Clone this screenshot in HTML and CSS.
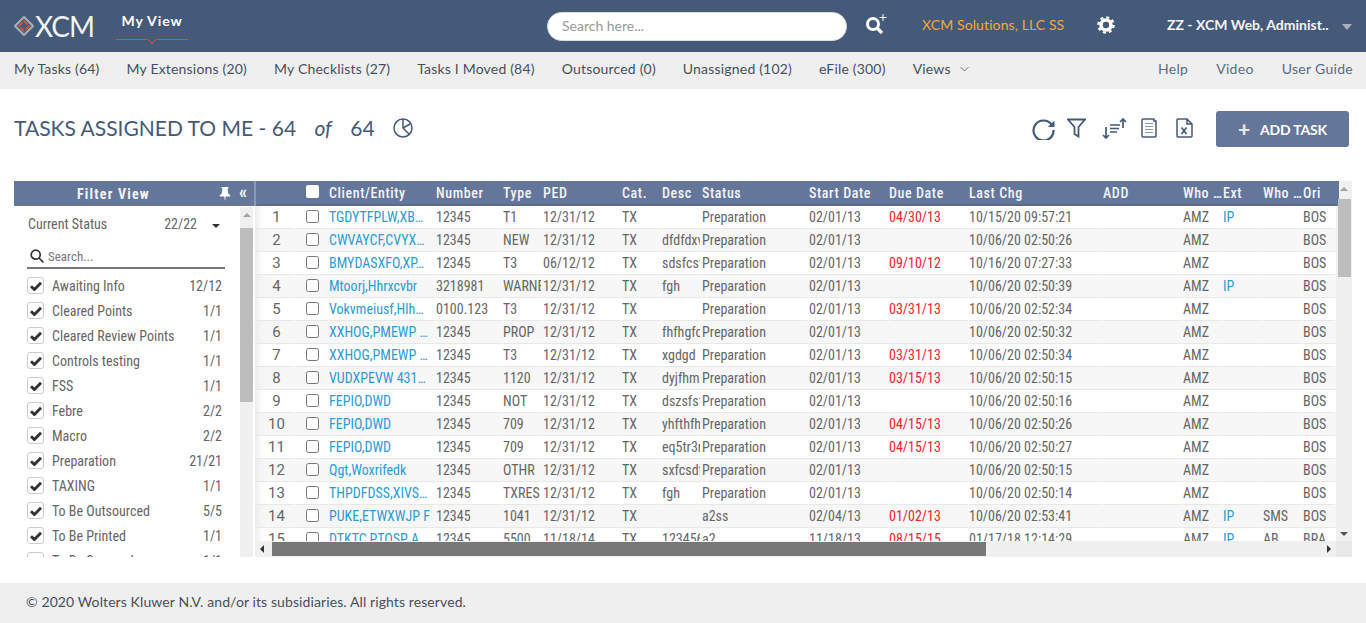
FILE: index.html
```html
<!DOCTYPE html>
<html lang="en">
<head>
	<meta charset="UTF-8">
	<title>XCM - My View</title>
	<link rel="stylesheet" href="styles.css">
</head>
<body>
<svg class="defs" width="0" height="0">
	<symbol id="tick" viewBox="0 0 12 10"><path d="M1 5.200l3.400 3.400L11 1.800" fill="none" stroke="#333" stroke-width="2.800"/></symbol>
</svg>

<header class="topbar">
	<div class="logo">
		<svg width="20" height="20" viewBox="0 0 20 20">
			<path d="M10 1l9 9-9 9-9-9z" fill="none" stroke="#a9adb5" stroke-width="2"/>
			<path d="M10 5l5 5-5 5-5-5z" fill="none" stroke="#c8563a" stroke-width="2" stroke-dasharray="5 2"/>
		</svg>
		<span class="logo_txt">XCM</span>
	</div>
	<div class="myview">My View<i></i></div>
	<input class="topsearch" type="text" placeholder="Search here...">
	<svg class="ic_search" width="24" height="24" viewBox="0 0 24 24">
		<circle cx="8" cy="11" r="5.500" fill="none" stroke="#fff" stroke-width="3"/>
		<path d="M12 15l5 5" stroke="#fff" stroke-width="3.200"/>
		<path d="M18 1v7M14.500 4.500h7" stroke="#fff" stroke-width="1"/>
	</svg>
	<span class="company">XCM Solutions, LLC SS</span>
	<svg class="ic_gear" width="18" height="18" viewBox="0 0 18 18">
		<circle cx="9" cy="9" r="5" fill="none" stroke="#fff" stroke-width="3.600"/>
		<circle cx="9" cy="9" r="7.600" fill="none" stroke="#fff" stroke-width="2.400" stroke-dasharray="3 2.970"/>
	</svg>
	<span class="username">ZZ - XCM Web, Administ..</span>
	<i class="caret_user"></i>
</header>

<nav class="subnav">
	<a>My Tasks (64)</a>
	<a>My Extensions (20)</a>
	<a>My Checklists (27)</a>
	<a>Tasks I Moved (84)</a>
	<a>Outsourced (0)</a>
	<a>Unassigned (102)</a>
	<a>eFile (300)</a>
	<a class="views">Views
		<svg width="9" height="6" viewBox="0 0 9 6"><path d="M.5 1l4 4 4-4" fill="none" stroke="#777"/></svg>
	</a>
	<div class="subnav_right">
		<a>Help</a>
		<a>Video</a>
		<a>User Guide</a>
	</div>
</nav>

<section class="titlerow">
	<h1>TASKS ASSIGNED TO ME - 64 <em>of</em> 64</h1>
	<svg class="ic_pie" width="20" height="20" viewBox="0 0 20 20" fill="none" stroke="#455a78" stroke-width="1.500">
		<circle cx="10" cy="10" r="9"/>
		<path d="M10 1v9l6 6M10 10l7-4"/>
	</svg>
	<div class="tools">
		<svg class="ic_refresh" width="23" height="23" viewBox="0 0 23 23" fill="none" stroke="#455a78" stroke-width="2.200">
			<path d="M19.500 7.500A10 10 0 1 0 21.500 13"/>
			<path d="M22.500 3.500v6.500h-6.500z" fill="#455a78" stroke="none"/>
		</svg>
		<svg class="ic_filter" width="19" height="20" viewBox="0 0 19 20" fill="none" stroke="#455a78" stroke-width="1.800">
			<path d="M1 1.500h17l-6.500 7.500v9.500l-4-2.500v-7z"/>
		</svg>
		<svg class="ic_sort" width="25" height="21" viewBox="0 0 25 21" fill="none" stroke="#455a78" stroke-width="1.700">
			<path d="M4 9v11M1 17l3 3 3-3M21 10V1M18 4l3-3 3 3"/>
			<path d="M8 7h10M8 10.500h9M8 14h7"/>
		</svg>
		<svg class="ic_doc" width="17" height="20" viewBox="0 0 17 20" fill="none" stroke="#455a78" stroke-width="1.500">
			<path d="M2 1h11v2h2v15a1 1 0 0 1-1 1H2a1 1 0 0 1-1-1V2a1 1 0 0 1 1-1z"/>
			<path d="M4 5.500h8M4 8.500h8M4 11.500h8M4 14.500h8" stroke="#8c9bb0" stroke-width="1.200"/>
		</svg>
		<svg class="ic_xls" width="17" height="20" viewBox="0 0 17 20" fill="none" stroke="#455a78" stroke-width="1.500">
			<path d="M2 1h9l5 5v12a1 1 0 0 1-1 1H2a1 1 0 0 1-1-1V2a1 1 0 0 1 1-1zM11 1v5h5"/>
			<path d="M5.500 9.500l5 6.500M10.500 9.500l-5 6.500" stroke-width="1.700"/>
		</svg>
		<button class="addtask"><span class="plus">+</span>ADD TASK</button>
	</div>
</section>

<main class="content">
	<aside class="filter">
		<div class="filter_head">
			<span class="filter_title">Filter View</span>
			<svg width="12" height="14" viewBox="0 0 12 14"><path d="M2.500 0h7v1.500H8.500l.7 5 2 1.800V9.500H6.700L6 14l-.7-4.500H.8V8.300l2-1.800.7-5h-1z" fill="#fff"/></svg>
			<span class="collapse">«</span>
		</div>
		<div class="filter_body">
			<div class="filter_inner">
				<div class="cur_status"><span>Current Status</span><span class="cur_count">22/22</span><i class="caret_dark"></i></div>
				<div class="filter_search">
					<svg width="14" height="14" viewBox="0 0 14 14" fill="none" stroke="#333" stroke-width="1.700">
						<circle cx="5.700" cy="5.700" r="4.500"/><path d="M9 9l4.300 4.300"/>
					</svg>
					<span>Search...</span>
				</div>
				<ul class="statuslist">
					<li><span class="cb"><svg><use href="#tick"/></svg></span><span class="lbl">Awaiting Info</span><span>12/12</span></li>
					<li><span class="cb"><svg><use href="#tick"/></svg></span><span class="lbl">Cleared Points</span><span>1/1</span></li>
					<li><span class="cb"><svg><use href="#tick"/></svg></span><span class="lbl">Cleared Review Points</span><span>1/1</span></li>
					<li><span class="cb"><svg><use href="#tick"/></svg></span><span class="lbl">Controls testing</span><span>1/1</span></li>
					<li><span class="cb"><svg><use href="#tick"/></svg></span><span class="lbl">FSS</span><span>1/1</span></li>
					<li><span class="cb"><svg><use href="#tick"/></svg></span><span class="lbl">Febre</span><span>2/2</span></li>
					<li><span class="cb"><svg><use href="#tick"/></svg></span><span class="lbl">Macro</span><span>2/2</span></li>
					<li><span class="cb"><svg><use href="#tick"/></svg></span><span class="lbl">Preparation</span><span>21/21</span></li>
					<li><span class="cb"><svg><use href="#tick"/></svg></span><span class="lbl">TAXING</span><span>1/1</span></li>
					<li><span class="cb"><svg><use href="#tick"/></svg></span><span class="lbl">To Be Outsourced</span><span>5/5</span></li>
					<li><span class="cb"><svg><use href="#tick"/></svg></span><span class="lbl">To Be Printed</span><span>1/1</span></li>
					<li><span class="cb"><svg><use href="#tick"/></svg></span><span class="lbl">To Be Scanned</span><span>1/1</span></li>
				</ul>
			</div>
			<div class="vscroll filter_scroll"><b class="up"></b><div class="thumb"></div></div>
		</div>
	</aside>

	<div class="grid">
		<div class="grid_top">
			<div class="grid_view">
				<table>
					<colgroup>
						<col class="c_no"><col class="c_chk"><col class="c_client"><col class="c_num"><col class="c_s"><col class="c_ped"><col class="c_s"><col class="c_s"><col class="c_status"><col class="c_date"><col class="c_date"><col class="c_last"><col class="c_date"><col class="c_s"><col class="c_s"><col class="c_s"><col class="c_ori">
					</colgroup>
					<thead>
						<tr><th></th><th><input type="checkbox" class="chk_head"></th><th>Client/Entity</th><th>Number</th><th>Type</th><th>PED</th><th>Cat.</th><th>Desc</th><th>Status</th><th>Start Date</th><th>Due Date</th><th>Last Chg</th><th>ADD</th><th>Who …</th><th>Ext</th><th>Who …</th><th>Ori</th></tr>
					</thead>
					<tbody>
						<tr><td class="no">1</td><td><input type="checkbox"></td><td class="lnk">TGDYTFPLW,XB…</td><td>12345</td><td>T1</td><td>12/31/12</td><td>TX</td><td></td><td>Preparation</td><td>02/01/13</td><td class="due">04/30/13</td><td>10/15/20 09:57:21</td><td></td><td>AMZ</td><td class="lnk">IP</td><td></td><td>BOS</td></tr>
						<tr><td class="no">2</td><td><input type="checkbox"></td><td class="lnk">CWVAYCF,CVYX…</td><td>12345</td><td>NEW</td><td>12/31/12</td><td>TX</td><td>dfdfdxv</td><td>Preparation</td><td>02/01/13</td><td></td><td>10/06/20 02:50:26</td><td></td><td>AMZ</td><td></td><td></td><td>BOS</td></tr>
						<tr><td class="no">3</td><td><input type="checkbox"></td><td class="lnk">BMYDASXFO,XP…</td><td>12345</td><td>T3</td><td>06/12/12</td><td>TX</td><td>sdsfcsf</td><td>Preparation</td><td>02/01/13</td><td class="due">09/10/12</td><td>10/16/20 07:27:33</td><td></td><td>AMZ</td><td></td><td></td><td>BOS</td></tr>
						<tr><td class="no">4</td><td><input type="checkbox"></td><td class="lnk">Mtoorj,Hhrxcvbr</td><td>3218981</td><td>WARNED</td><td>12/31/12</td><td>TX</td><td>fgh</td><td>Preparation</td><td>02/01/13</td><td></td><td>10/06/20 02:50:39</td><td></td><td>AMZ</td><td class="lnk">IP</td><td></td><td>BOS</td></tr>
						<tr><td class="no">5</td><td><input type="checkbox"></td><td class="lnk">Vokvmeiusf,Hlh…</td><td>0100.123</td><td>T3</td><td>12/31/12</td><td>TX</td><td></td><td>Preparation</td><td>02/01/13</td><td class="due">03/31/13</td><td>10/06/20 02:52:34</td><td></td><td>AMZ</td><td></td><td></td><td>BOS</td></tr>
						<tr><td class="no">6</td><td><input type="checkbox"></td><td class="lnk">XXHOG,PMEWP …</td><td>12345</td><td>PROP</td><td>12/31/12</td><td>TX</td><td>fhfhgfcg</td><td>Preparation</td><td>02/01/13</td><td></td><td>10/06/20 02:50:32</td><td></td><td>AMZ</td><td></td><td></td><td>BOS</td></tr>
						<tr><td class="no">7</td><td><input type="checkbox"></td><td class="lnk">XXHOG,PMEWP …</td><td>12345</td><td>T3</td><td>12/31/12</td><td>TX</td><td>xgdgd</td><td>Preparation</td><td>02/01/13</td><td class="due">03/31/13</td><td>10/06/20 02:50:34</td><td></td><td>AMZ</td><td></td><td></td><td>BOS</td></tr>
						<tr><td class="no">8</td><td><input type="checkbox"></td><td class="lnk">VUDXPEVW 431…</td><td>12345</td><td>1120</td><td>12/31/12</td><td>TX</td><td>dyjfhmf</td><td>Preparation</td><td>02/01/13</td><td class="due">03/15/13</td><td>10/06/20 02:50:15</td><td></td><td>AMZ</td><td></td><td></td><td>BOS</td></tr>
						<tr><td class="no">9</td><td><input type="checkbox"></td><td class="lnk">FEPIO,DWD</td><td>12345</td><td>NOT</td><td>12/31/12</td><td>TX</td><td>dszsfsf</td><td>Preparation</td><td>02/01/13</td><td></td><td>10/06/20 02:50:16</td><td></td><td>AMZ</td><td></td><td></td><td>BOS</td></tr>
						<tr><td class="no">10</td><td><input type="checkbox"></td><td class="lnk">FEPIO,DWD</td><td>12345</td><td>709</td><td>12/31/12</td><td>TX</td><td>yhfthfhf</td><td>Preparation</td><td>02/01/13</td><td class="due">04/15/13</td><td>10/06/20 02:50:26</td><td></td><td>AMZ</td><td></td><td></td><td>BOS</td></tr>
						<tr><td class="no">11</td><td><input type="checkbox"></td><td class="lnk">FEPIO,DWD</td><td>12345</td><td>709</td><td>12/31/12</td><td>TX</td><td>eq5tr3rt</td><td>Preparation</td><td>02/01/13</td><td class="due">04/15/13</td><td>10/06/20 02:50:27</td><td></td><td>AMZ</td><td></td><td></td><td>BOS</td></tr>
						<tr><td class="no">12</td><td><input type="checkbox"></td><td class="lnk">Qgt,Woxrifedk</td><td>12345</td><td>OTHR</td><td>12/31/12</td><td>TX</td><td>sxfcsdf</td><td>Preparation</td><td>02/01/13</td><td></td><td>10/06/20 02:50:15</td><td></td><td>AMZ</td><td></td><td></td><td>BOS</td></tr>
						<tr><td class="no">13</td><td><input type="checkbox"></td><td class="lnk">THPDFDSS,XIVS…</td><td>12345</td><td>TXRES</td><td>12/31/12</td><td>TX</td><td>fgh</td><td>Preparation</td><td>02/01/13</td><td></td><td>10/06/20 02:50:14</td><td></td><td>AMZ</td><td></td><td></td><td>BOS</td></tr>
						<tr><td class="no">14</td><td><input type="checkbox"></td><td class="lnk">PUKE,ETWXWJP F</td><td>12345</td><td>1041</td><td>12/31/12</td><td>TX</td><td></td><td>a2ss</td><td>02/04/13</td><td class="due">01/02/13</td><td>10/06/20 02:53:41</td><td></td><td>AMZ</td><td class="lnk">IP</td><td>SMS</td><td>BOS</td></tr>
						<tr><td class="no">15</td><td><input type="checkbox"></td><td class="lnk">DTKTC,PTOSP A…</td><td>12345</td><td>5500</td><td>11/18/14</td><td>TX</td><td>12345678</td><td>a2</td><td>11/18/13</td><td class="due">08/15/15</td><td>01/17/18 12:14:29</td><td></td><td>AMZ</td><td class="lnk">IP</td><td>AB</td><td>BRA</td></tr>
					</tbody>
				</table>
			</div>
			<div class="vscroll grid_vscroll"><b class="up"></b><div class="thumb"></div><b class="down"></b></div>
		</div>
		<div class="hscroll"><b class="left"></b><div class="hthumb"></div><b class="right"></b><span class="corner"></span></div>
	</div>
</main>

<footer class="foot">© 2020 Wolters Kluwer N.V. and/or its subsidiaries. All rights reserved.</footer>
</body>
</html>
```

FILE: styles.css
```css
:root {
	--navy: #455a78;
	--slate: #64779b;
	--track: #f0f0f0;
}

* {box-sizing: border-box;}

html, body {height: 100%;}
body {margin: 0; display: flex; flex-direction: column; overflow: hidden; font-family: "Lato", "Open Sans", sans-serif; color: #455a78; background: #fff;}

.defs {position: absolute;}

/* top bar */
.topbar {height: 52px; flex: none; background: var(--navy); display: flex; align-items: center; color: #fff;}
.logo {display: flex; align-items: center; margin-left: 14px; width: 102px; gap: 1px;}
.logo_txt {font-size: 28px; font-weight: 400; letter-spacing: -1px; line-height: 28px; color: #f2f3f5;}
.myview {width: 72px; height: 39px; margin-top: -12px; padding-top: 11px; text-align: center; font-size: 14px; font-weight: 700; letter-spacing: .9px; border-bottom: 1px solid #c8563a; position: relative; line-height: 18px;}
.myview i {position: absolute; left: 33px; bottom: -4px; width: 6px; height: 6px; border-right: 1px solid #c8563a; border-bottom: 1px solid #c8563a; background: var(--navy); transform: rotate(45deg);}
.topsearch {width: 300px; height: 29px; margin-left: 359px; border: 1px solid #ddd; border-radius: 15px; padding: 0 14px 2px; font: 14px "Lato", sans-serif; outline: none;}
.topsearch::placeholder {color: #999;}
.ic_search {margin-left: 18px; margin-top: -3px;}
.company {margin-left: 33px; margin-top: -3px; width: 175px; font-size: 14px; letter-spacing: .1px; color: #f7a73b;}
.ic_gear {flex: none; margin-top: -2px;}
.username {margin-left: 52px; margin-top: -3px; width: 171px; font-size: 14px; font-weight: 700; white-space: nowrap; color: #f4f5f7;}
.caret_user {margin-left: 4px; margin-top: 2px; border: 5px solid transparent; border-top: 6px solid #a8b0be; border-bottom: 0;}

/* second row */
.subnav {height: 37px; flex: none; background: #efefef; display: flex; align-items: center; padding: 0 13px 5px 14px; gap: 27px; font-size: 14px; letter-spacing: .19px; color: #474f5e; white-space: nowrap;}
.views svg {margin-left: 5px; vertical-align: 2px;}
.subnav_right {margin-left: auto; display: flex; gap: 28px; letter-spacing: .3px; color: #5b6b84;}

/* title */
.titlerow {height: 92px; flex: none; display: flex; align-items: center; padding: 0 17px 12px 14px;}
h1 {margin: 0 0 4px; font-size: 21px; font-weight: 400; color: var(--navy);}
h1 em {margin: 0 13px; font-weight: 400;}
.ic_pie {margin: 0 0 2px 18px;}
.tools {margin-left: auto; display: flex; align-items: center;}
.tools svg {margin-bottom: 2px;}
.ic_refresh {margin-right: 12px;}
.ic_filter {margin-right: 16px;}
.ic_sort {margin-right: 14px;}
.ic_doc {margin-right: 18px;}
.ic_xls {margin-right: 23px;}
.addtask {width: 133px; height: 36px; border: 0; border-radius: 3px; padding: 0 0 2px; background: var(--slate); color: #fff; font: 700 14px "Lato", sans-serif; letter-spacing: -.2px;}
.plus {font-size: 21px; font-weight: 900; margin-right: 10px; vertical-align: -2px; color: #e4e7ee;}

/* filter + grid */
.content {height: 376px; flex: none; margin: 0 14px; display: flex; font-family: "Roboto", sans-serif; font-stretch: 87%; font-size: 14px; color: #666;}

.filter {width: 241px; flex: none; display: flex; flex-direction: column;}
.filter_head {height: 25px; flex: none; background: var(--slate); border-right: 1px solid #8a9ab5; color: #f2f4f8; display: flex; align-items: center; padding: 0 7px 0 0;}
.filter_title {flex: 1; text-align: center; font-weight: 700; letter-spacing: 1.2px; padding-right: 6px;}
.collapse {font-size: 18px; line-height: 20px; margin-left: 8px; margin-top: -3px; font-weight: 700;}
.filter_body {flex: 1; display: flex; min-height: 0;}
.filter_inner {flex: 1; overflow: hidden; padding: 0 0 0 13px; min-width: 0;}
.cur_status {height: 35px; display: flex; align-items: center; padding: 0 20px 0 1px; color: #666;}
.cur_status span:first-child {flex: 1;}
.cur_count {margin-right: 15px;}
.caret_dark {margin-top: 4px; border: 4px solid transparent; border-top: 4px solid #333; border-bottom: 0;}
.filter_search {width: 198px; height: 28px; display: flex; align-items: center; gap: 4px; border-bottom: 2px solid #777; padding: 4px 3px 0; color: #777; font-size: 13px;}
.statuslist {list-style: none; margin: 4px 0 0; padding: 0; width: 195px;}
.statuslist li {height: 25px; display: flex; align-items: center; color: #666;}
.cb {width: 17px; height: 17px; margin-right: 8px; border: 1px solid #ccc; border-radius: 3px; display: flex; align-items: center; justify-content: center; background: #fff;}
.cb svg {width: 12px; height: 10px;}
.lbl {flex: 1;}

.vscroll {flex: none; background: var(--track); display: flex; flex-direction: column; align-items: center;}
.filter_scroll {width: 13px; margin-right: 2px; margin-top: 1px;}
.filter_scroll .thumb {width: 13px; height: 174px; margin-top: 11px; background: #bdbdbd;}
.up {margin-top: 6px; flex: none; border: 4px solid transparent; border-bottom: 4px solid #a3a3a3; border-top: 0;}
.down {margin-top: auto; margin-bottom: 5px; flex: none; border: 4px solid transparent; border-top: 4px solid #505050; border-bottom: 0;}

.grid {flex: 1; min-width: 0; display: flex; flex-direction: column;}
.grid_top {flex: 1; min-height: 0; display: flex;}
.grid_view {width: 1081px; height: 360px; overflow: hidden; background: linear-gradient(var(--slate) 25px, transparent 25px);}
table {width: 1081px; table-layout: fixed; border-collapse: separate; border-spacing: 0;}
.c_no {width: 41px;}
.c_chk {width: 33px;}
.c_client {width: 107px;}
.c_num {width: 67px;}
.c_s {width: 40px;}
.c_ped {width: 79px;}
.c_status {width: 107px;}
.c_date {width: 80px;}
.c_last {width: 134px;}
.c_ori {width: 33px;}
th {height: 25px; padding: 0 0 2px; text-align: left; background: var(--slate); color: #f2f4f8; font-weight: 500; letter-spacing: .6px; white-space: nowrap; overflow: hidden; box-shadow: inset 0 -2px 0 #5a6c8e;}
th:first-child {border-left: 1px solid #8a9ab5;}
td {height: 23px; padding: 0; white-space: nowrap; overflow: hidden; border-right: 2px solid transparent; border-bottom: 1px solid #e8e8e8;}
tbody tr:nth-child(even) td {background: #f7f7f7;}
td.no {text-align: center; padding-left: 4px; color: #666; font-size: 15px; font-stretch: 100%; box-shadow: inset 10px 0 8px -8px #e4e4e4;}
td.lnk {color: #2e9bd6;}
td.due {color: #f5222d;}
input[type=checkbox] {display: block; margin: 0 0 2px 10px; width: 13px; height: 13px;}
.chk_head {appearance: none; background: #fff; border-radius: 2px; border: 0;}
.grid_vscroll {width: 16px; height: 360px; background: linear-gradient(90deg, var(--slate) 3px, transparent 3px) 0 0 / 100% 25px no-repeat, var(--track);}
.grid_vscroll .thumb {width: 13px; height: 78px; margin-top: 8px; background: #bdbdbd;}

.hscroll {height: 16px; flex: none; background: var(--track); display: flex; align-items: center;}
.left {margin-left: 5px; flex: none; border: 4px solid transparent; border-right: 4px solid #333; border-left: 0;}
.hthumb {width: 714px; height: 14px; margin-left: 8px; background: #787878;}
.right {margin-left: auto; margin-right: 5px; flex: none; border: 4px solid transparent; border-left: 4px solid #333; border-right: 0;}
.corner {width: 16px; height: 16px; background: #e8e8e8;}

.foot {margin-top: auto; height: 40px; flex: none; background: #efefef; display: flex; align-items: center; padding: 0 0 3px 26px; font-size: 14px; letter-spacing: .1px; color: #4a4f59;}
```
